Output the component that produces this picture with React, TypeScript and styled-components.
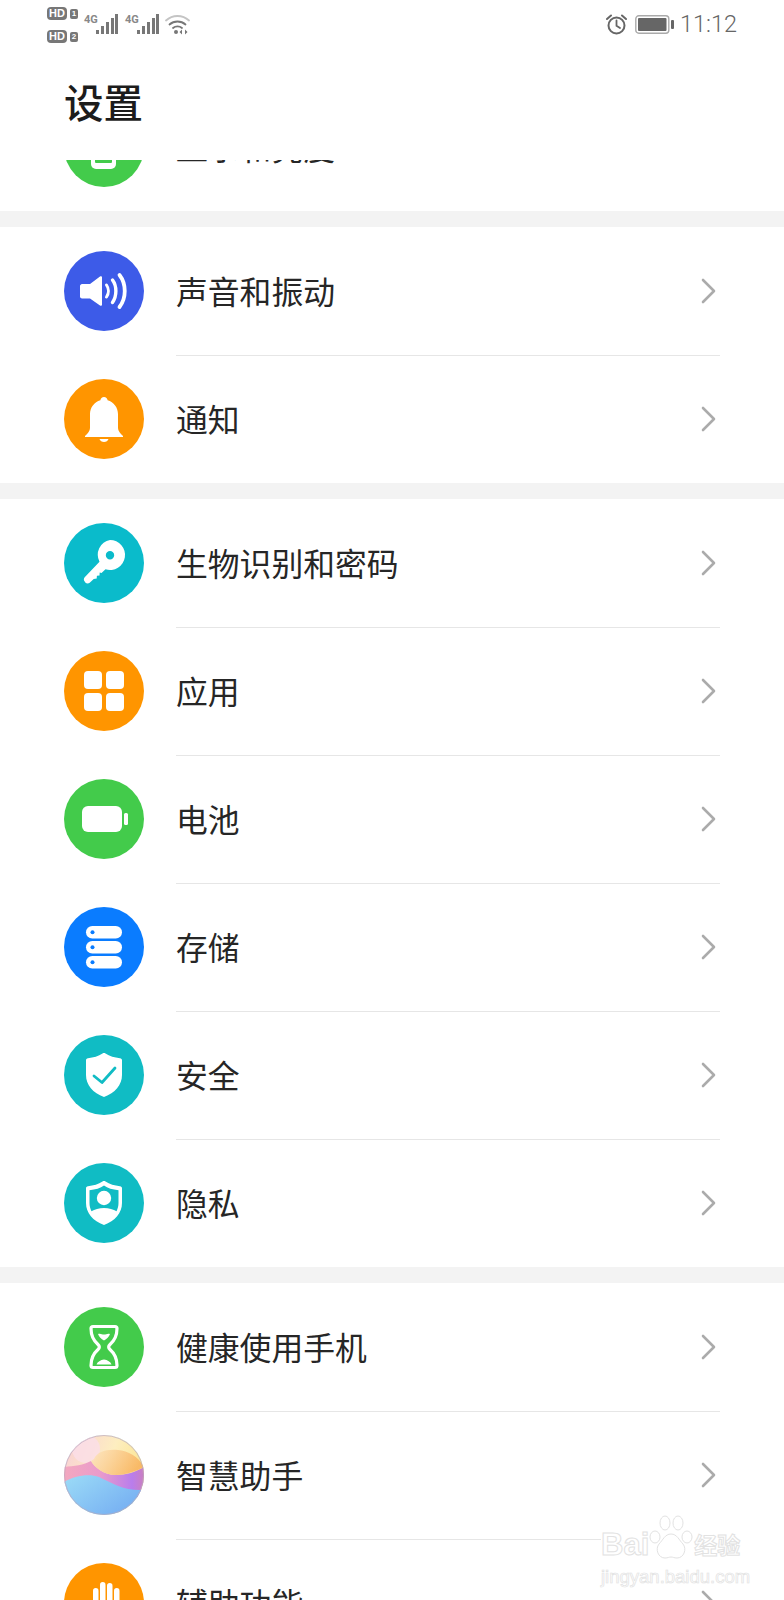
import React from 'react'
import styled, { createGlobalStyle } from 'styled-components'

const GlobalStyle = createGlobalStyle`
  html, body {
    margin: 0;
    padding: 0;
    background: #fff;
  }
  body {
    font-family: 'Noto Sans CJK SC', 'Noto Sans', sans-serif;
  }
`

const Phone = styled.div`
  position: relative;
  width: 784px;
  height: 1600px;
  overflow: hidden;
  display: flex;
  flex-direction: column;
  background: #fff;
`

/* status bar */

const StatusBar = styled.div`
  flex: none;
  height: 48px;
  box-sizing: border-box;
  display: flex;
  justify-content: space-between;
  align-items: flex-start;
  padding: 7px 47px 0 47px;
  color: #666;
`

const StatusGroup = styled.div`
  display: flex;
  align-items: flex-start;
`

const SimColumn = styled.div`
  display: flex;
  flex-direction: column;
  gap: 10px;
  width: 32px;
`

const SimLine = styled.div`
  display: flex;
  align-items: center;
  gap: 3px;
`

const HdBadge = styled.span`
  width: 20px;
  height: 13px;
  border-radius: 4px;
  background: #777;
  color: #fff;
  font: 700 11px/13px 'Liberation Sans', sans-serif;
  text-align: center;
`

const SimIndex = styled.span`
  width: 8px;
  height: 10px;
  border-radius: 2px;
  background: #777;
  color: #fff;
  font: 700 8px/10px 'Liberation Sans', sans-serif;
  text-align: center;
`

const Signal = styled.div<{ $first?: boolean }>`
  position: relative;
  width: 34px;
  height: 20px;
  margin: 7px 0 0 ${p => (p.$first ? '5px' : '7px')};
`

const NetworkLabel = styled.span`
  position: absolute;
  left: 0;
  top: 0;
  font: 700 11px/11px 'Roboto', sans-serif;
  color: #888;
`

const SignalBars = styled.svg`
  position: absolute;
  right: 0;
  top: 0;
`

const StatusIcon = styled.svg`
  flex: none;
`

const WifiIcon = styled(StatusIcon)`
  margin: 7px 0 0 6px;
`

const AlarmIcon = styled(StatusIcon)`
  margin-top: 7px;
`

const BatteryIcon = styled(StatusIcon)`
  margin: 8px 0 0 8px;
`

const Clock = styled.span`
  margin-left: 6px;
  font: 300 23.5px/34px 'Roboto', sans-serif;
  color: #666;
`

/* title */

const Header = styled.div`
  flex: none;
  height: 112px;
  box-sizing: border-box;
  display: flex;
  align-items: center;
  padding: 0 0 6px 64px;
`

const Title = styled.h1`
  margin: 0;
  font-size: 39.5px;
  line-height: 56px;
  font-weight: 500;
  color: #1c1c1c;
`

/* list */

const Scroller = styled.div`
  flex: 1;
  min-height: 0;
  overflow: hidden;
`

const ScrollContent = styled.div`
  margin-top: -77px;
`

const Group = styled.section`
  border-bottom: 16px solid #f3f3f3;
  background: #fff;

  &:last-child {
    border-bottom: 0;
  }
`

const Row = styled.div`
  height: 128px;
  padding: 0 64px;
  display: flex;
  align-items: center;

  &:last-child > div:last-child {
    box-shadow: none;
  }
`

const IconCircle = styled.div<{ $bg: string }>`
  flex: none;
  width: 80px;
  height: 80px;
  margin-right: 32px;
  border-radius: 50%;
  overflow: hidden;
  background: ${p => p.$bg};

  svg {
    display: block;
  }
`

const RowBody = styled.div`
  flex: 1;
  height: 100%;
  box-sizing: border-box;
  display: flex;
  align-items: center;
  justify-content: space-between;
  padding-right: 4px;
  box-shadow: 0 1px 0 #e6e6e6;
`

const Label = styled.span`
  margin-top: -2px;
  font-size: 31.8px;
  line-height: 44px;
  color: #262626;
`

/* watermark */

const Watermark = styled.div`
  position: absolute;
  left: 601px;
  top: 1514px;
  width: 146px;
`

const MarkLine = styled.div`
  height: 46px;
  display: flex;
  align-items: flex-end;
  background: linear-gradient(transparent 23px, #fff 23px);
`

const MarkText = styled.span`
  font: 700 31px/30px 'Liberation Sans', 'Noto Sans CJK SC', sans-serif;
  color: #fff;
  -webkit-text-stroke: 1px #e2e2e2;
`

const MarkCjk = styled(MarkText)`
  font-size: 23px;
  line-height: 28px;
  margin-left: 1px;
`

const MarkUrl = styled.div`
  margin-top: 7px;
  font: 400 18.5px/20px 'Liberation Sans', sans-serif;
  white-space: nowrap;
  color: #fff;
  -webkit-text-stroke: 0.7px #e2e2e2;
`

const Glyph = ({ children }: { children: React.ReactNode }) => (
  <svg width="80" height="80" viewBox="0 0 80 80">
    {children}
  </svg>
)

const Chevron = () => (
  <svg width="16" height="28" viewBox="0 0 16 28" fill="none">
    <path d="M3 3l11 11L3 25" stroke="#ababab" strokeWidth="2.600" strokeLinecap="round" strokeLinejoin="round" />
  </svg>
)

const DisplayIcon = (
  <Glyph>
    <rect x="27" y="20" width="25" height="42" rx="5" fill="#fff" />
    <rect x="31" y="24" width="17" height="32" rx="1" fill="#43cb4b" />
  </Glyph>
)

const SoundIcon = (
  <Glyph>
    <path d="M18 33h8l10-7.500c1-.7 2-.2 2 1v27c0 1.200-1 1.700-2 1L26 47.500h-8c-1 0-2-1-2-2V35c0-1 1-2 2-2z" fill="#fff" />
    <g fill="none" stroke="#fff" strokeLinecap="round">
      <path d="M42.500 34c2.500 3.500 2.500 8.500 0 12" strokeWidth="3" />
      <path d="M48.500 29c4.500 6 4.500 16 0 22.500" strokeWidth="3.400" />
      <path d="M55.500 24c7 9 7 23 0 32" strokeWidth="3.800" />
    </g>
  </Glyph>
)

const BellIcon = (
  <Glyph>
    <path d="M40 18c2 0 3.400 1.400 3.600 3.200C49.800 23 54 28.500 54 35v14c0 3 2 5 5 8v1H21v-1c3-3 5-5 5-8V35c0-6.500 4.200-12 10.400-13.800C36.600 19.400 38 18 40 18z" fill="#fff" />
    <path d="M35.500 60h9c-.6 2-2.400 3-4.500 3s-3.900-1-4.500-3z" fill="#fff" />
  </Glyph>
)

const KeyIcon = (
  <Glyph>
    <path fillRule="evenodd" d="M46 17a15 15 0 1 1-4.500 29.300l-4 3.700-1.800-.6-.2 3-2.600.4-.2 2.800-3 .5-4 3.600c-1.400 1.100-3.200 1-4.400-.3l-.6-.8c-1.200-1.300-1.100-3.100 0-4.300l14.800-15.500A15 15 0 0 1 46 17zm0 11a4.200 4.200 0 1 0 0 8.400 4.200 4.200 0 0 0 0-8.400z" fill="#fff" />
  </Glyph>
)

const AppsIcon = (
  <Glyph>
    <rect x="20" y="20" width="18" height="18" rx="4" fill="#fff" />
    <rect x="42" y="20" width="18" height="18" rx="4" fill="#fff" />
    <rect x="20" y="42" width="18" height="18" rx="4" fill="#fff" />
    <rect x="42" y="42" width="18" height="18" rx="4" fill="#fff" />
  </Glyph>
)

const BatteryGlyph = (
  <Glyph>
    <rect x="18" y="27" width="40" height="26" rx="6" fill="#fff" />
    <rect x="60" y="34" width="4" height="12" rx="1.500" fill="#fff" />
  </Glyph>
)

const StorageIcon = (
  <Glyph>
    {[19, 34, 49].map(y => (
      <g key={y}>
        <rect x="22" y={y} width="36" height="12.500" rx="6.250" fill="#fff" />
        <circle cx="28.500" cy={y + 6.2} r="2" fill="#0a7cff" />
      </g>
    ))}
  </Glyph>
)

const ShieldPath =
  'M38.500 18.500c1-.6 2-.6 3 0 4 2.600 9 4.200 14.500 4.700 1.300.1 2 .9 2 2.100V40c0 10-7 18-18 22-11-4-18-12-18-22V25.300c0-1.200.7-2 2-2.100 5.500-.5 10.500-2.100 14.500-4.700z'

const SafetyIcon = (
  <Glyph>
    <path d={ShieldPath} fill="#fff" />
    <path d="M30 41l8 6.500L51 33" fill="none" stroke="#10bcc4" strokeWidth="2.800" strokeLinecap="round" strokeLinejoin="round" />
  </Glyph>
)

const PrivacyIcon = (
  <Glyph>
    <path d={ShieldPath} fill="#fff" />
    <path d="M40 22.500c3.600 2.600 8.500 4.200 14.500 4.700V40c0 3-.7 5.800-2 8.300-3-2-7.500-3.300-12.500-3.300s-9.500 1.300-12.500 3.300c-1.300-2.500-2-5.300-2-8.300V27.200c6-.5 10.900-2.100 14.500-4.700z" fill="#10bcc4" />
    <circle cx="40" cy="35" r="7.200" fill="#fff" />
  </Glyph>
)

const HourglassIcon = (
  <Glyph>
    <path d="M29 19.500h22c1.500 0 2 .8 2 2 0 8-3 12.500-7 16-1.800 1.600-1.800 3.400 0 5 4 3.500 7 8 7 16 0 1.200-.5 2-2 2H29c-1.500 0-2-.8-2-2 0-8 3-12.500 7-16 1.800-1.600 1.800-3.400 0-5-4-3.500-7-8-7-16 0-1.200.5-2 2-2z" fill="none" stroke="#fff" strokeWidth="3.200" />
    <path d="M34 27c2.500-1 4 .6 6 .6s3.500-1.600 6-.6c-1 2.600-3.200 5-6 6.500-2.800-1.500-5-3.900-6-6.500z" fill="#fff" />
    <path d="M32.500 57.500c1-2.800 4-4.500 7.500-5 3.500.5 6.500 2.200 7.500 5z" fill="#fff" />
  </Glyph>
)

const AssistantIcon = (
  <Glyph>
    <defs>
      <linearGradient id="sky" x1="0" y1="0" x2="1" y2="0.4">
        <stop offset="0" stopColor="#f8cdd8" />
        <stop offset="0.6" stopColor="#fdeec0" />
        <stop offset="1" stopColor="#fbe48f" />
      </linearGradient>
      <linearGradient id="lobe" x1="0" y1="0" x2="1" y2="0.3">
        <stop offset="0" stopColor="#fde7c0" />
        <stop offset="1" stopColor="#f8b25e" />
      </linearGradient>
      <linearGradient id="band" x1="0" y1="0" x2="1" y2="0">
        <stop offset="0" stopColor="#f3a8bf" />
        <stop offset="0.45" stopColor="#ea9bcb" />
        <stop offset="0.85" stopColor="#b97dec" />
        <stop offset="1" stopColor="#cc7fc0" />
      </linearGradient>
      <linearGradient id="water" x1="0" y1="0" x2="1" y2="0.7">
        <stop offset="0" stopColor="#9cdcf7" />
        <stop offset="1" stopColor="#75aef2" />
      </linearGradient>
    </defs>
    <rect width="80" height="80" fill="url(#sky)" />
    <circle cx="22" cy="14" r="14" fill="#fbdfe8" opacity="0.8" />
    <path d="M0 32c10-1 20-2 27-6 3 6 13 14 25 14 10 0 20-3 28-8v30H0z" fill="url(#band)" />
    <path d="M30 24c3-7 12-10 24-9 10 1 20 6 26 17-8 4-18 8-28 8-12 0-22-8-25-14z" fill="url(#lobe)" opacity="0.85" />
    <path d="M0 47c10-6 25-9 35-5 15 7 25 14 45 13v25H0z" fill="url(#water)" />
    <circle cx="40" cy="40" r="39.500" fill="none" stroke="#b9a9c0" strokeWidth="1" opacity="0.7" />
  </Glyph>
)

const HandIcon = (
  <Glyph>
    <rect x="29" y="25" width="5.500" height="30" rx="2.700" fill="#fff" />
    <rect x="36" y="19" width="5.500" height="36" rx="2.700" fill="#fff" />
    <rect x="43" y="20" width="5.500" height="36" rx="2.700" fill="#fff" />
    <rect x="50" y="25" width="5.500" height="30" rx="2.700" fill="#fff" />
  </Glyph>
)

type Item = { label: string; bg: string; icon: React.ReactNode }

const groups: Item[][] = [
  [{ label: '显示和亮度', bg: '#43cb4b', icon: DisplayIcon }],
  [
    { label: '声音和振动', bg: '#3d5be8', icon: SoundIcon },
    { label: '通知', bg: '#ff9500', icon: BellIcon },
  ],
  [
    { label: '生物识别和密码', bg: '#0abbcb', icon: KeyIcon },
    { label: '应用', bg: '#ff9500', icon: AppsIcon },
    { label: '电池', bg: '#43cb4b', icon: BatteryGlyph },
    { label: '存储', bg: '#0a7cff', icon: StorageIcon },
    { label: '安全', bg: '#10bcc4', icon: SafetyIcon },
    { label: '隐私', bg: '#10bcc4', icon: PrivacyIcon },
  ],
  [
    { label: '健康使用手机', bg: '#43cb4b', icon: HourglassIcon },
    { label: '智慧助手', bg: '#a9c9ee', icon: AssistantIcon },
    { label: '辅助功能', bg: '#ff9500', icon: HandIcon },
  ],
]

const SignalGlyph = () => (
  <SignalBars width="22" height="20" viewBox="0 0 22 20" fill="#777">
    <rect x="0" y="16" width="3" height="4" />
    <rect x="5" y="12" width="3" height="8" />
    <rect x="10" y="8" width="3" height="12" />
    <rect x="15" y="4" width="3" height="16" />
    <rect x="19" y="0" width="3" height="20" />
  </SignalBars>
)

function StatusRow() {
  return (
    <StatusBar>
      <StatusGroup>
        <SimColumn>
          <SimLine>
            <HdBadge>HD</HdBadge>
            <SimIndex>1</SimIndex>
          </SimLine>
          <SimLine>
            <HdBadge>HD</HdBadge>
            <SimIndex>2</SimIndex>
          </SimLine>
        </SimColumn>
        <Signal $first>
          <NetworkLabel>4G</NetworkLabel>
          <SignalGlyph />
        </Signal>
        <Signal>
          <NetworkLabel>4G</NetworkLabel>
          <SignalGlyph />
        </Signal>
        <WifiIcon width="25" height="22" viewBox="0 0 25 22" fill="none">
          <path d="M1 6.500c6.500-6 16.500-6 23 0" stroke="#c4c4c4" strokeWidth="1.800" strokeLinecap="round" />
          <path d="M4.500 10.500c4.500-4 11.500-4 16 0" stroke="#777" strokeWidth="1.800" strokeLinecap="round" />
          <path d="M8 14c2.500-2.200 6.500-2.200 9 0" stroke="#777" strokeWidth="1.800" strokeLinecap="round" />
          <circle cx="11" cy="18" r="2" fill="#777" />
          <path d="M17 15.500v5l-2.500-2.500zM20 15.500v5l2.500-2.500z" fill="#777" />
        </WifiIcon>
      </StatusGroup>
      <StatusGroup>
        <AlarmIcon width="21" height="21" viewBox="0 0 21 21" fill="none">
          <circle cx="10.500" cy="11.500" r="8" stroke="#666" strokeWidth="2" />
          <path d="M10.500 6.500v5.200l3.500 2.300" stroke="#666" strokeWidth="1.800" strokeLinecap="round" />
          <path d="M1 5l4-3.500M20 5l-4-3.500" stroke="#666" strokeWidth="2" strokeLinecap="round" />
        </AlarmIcon>
        <BatteryIcon width="39" height="19" viewBox="0 0 39 19" fill="none">
          <rect x="0.800" y="0.800" width="33" height="17.400" rx="3" stroke="#aaa" strokeWidth="1.400" />
          <rect x="3" y="3" width="28.500" height="13" rx="1" fill="#666" />
          <rect x="36" y="5" width="3" height="9" rx="1" fill="#666" />
        </BatteryIcon>
        <Clock>11:12</Clock>
      </StatusGroup>
    </StatusBar>
  )
}

export default function App() {
  return (
    <Phone>
      <GlobalStyle />
      <StatusRow />
      <Header>
        <Title>设置</Title>
      </Header>
      <Scroller>
        <ScrollContent>
          {groups.map((items, i) => (
            <Group key={i}>
              {items.map(item => (
                <Row key={item.label}>
                  <IconCircle $bg={item.bg}>{item.icon}</IconCircle>
                  <RowBody>
                    <Label>{item.label}</Label>
                    <Chevron />
                  </RowBody>
                </Row>
              ))}
            </Group>
          ))}
        </ScrollContent>
      </Scroller>
      <Watermark>
        <MarkLine>
          <MarkText>Bai</MarkText>
          <svg width="44" height="46" viewBox="0 0 44 46" fill="#fff" stroke="#e2e2e2" strokeWidth="1">
            <ellipse cx="6" cy="23" rx="5" ry="6" />
            <ellipse cx="16" cy="9" rx="5" ry="7" />
            <ellipse cx="29" cy="9" rx="5" ry="7" />
            <ellipse cx="38" cy="23" rx="5" ry="6" />
            <path d="M22 20c6 0 8 6 12 10 4 5 1 14-6 14-3 0-4-1-6-1s-3 1-6 1c-7 0-10-9-6-14 4-4 6-10 12-10z" />
          </svg>
          <MarkCjk>经验</MarkCjk>
        </MarkLine>
        <MarkUrl>jingyan.baidu.com</MarkUrl>
      </Watermark>
    </Phone>
  )
}
